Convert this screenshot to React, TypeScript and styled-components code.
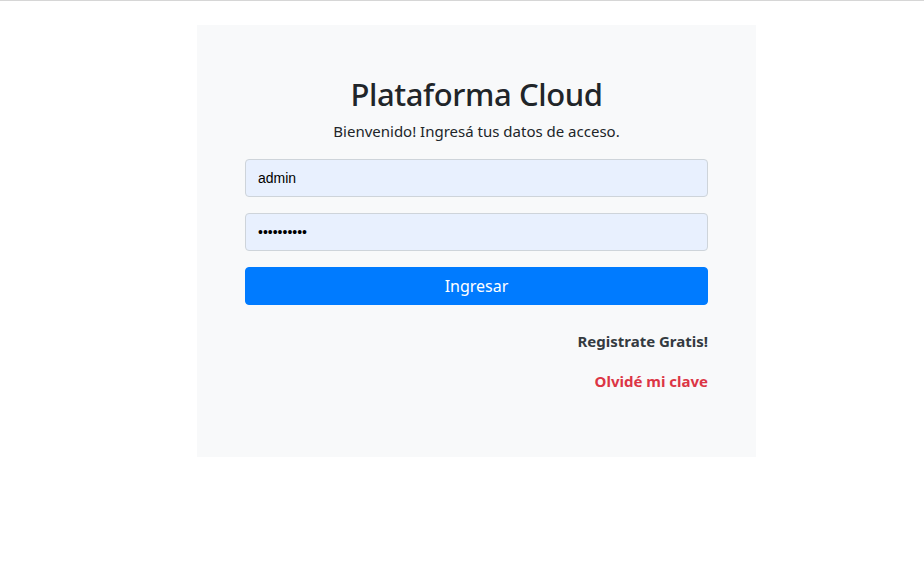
import React from "react";
import styled, { createGlobalStyle } from "styled-components";

const Global = createGlobalStyle`
  html, body { margin: 0; padding: 0; background: #fff; }
  body {
    font-family: "Noto Sans", "Open Sans", "DejaVu Sans", sans-serif;
    color: #212529;
    border-top: 1px solid #d6d6d6;
  }
  * { box-sizing: border-box; }
`;

const Page = styled.div`
  display: flex;
  padding: 24px 0 0 197px;
`;

const Card = styled.div`
  width: 559px;
  background: #f8f9fa;
  padding: 50px 48px 48px 48px;
  display: flex;
  flex-direction: column;
`;

const Title = styled.h1`
  margin: 0 0 6px;
  font-size: 31px;
  font-weight: 500;
  letter-spacing: -0.4px;
  line-height: 38px;
  text-align: center;
  color: #212529;
`;

const Subtitle = styled.p`
  margin: 0 0 16px;
  font-size: 15px;
  line-height: 24px;
  text-align: center;
  color: #212529;
`;

const Input = styled.input`
  display: block;
  width: 100%;
  height: 38px;
  margin: 0 0 16px;
  padding: 0 12px;
  border: 1px solid #ced4da;
  border-radius: 4px;
  background: #e8f0fe;
  font-family: "Liberation Sans", Arial, sans-serif;
  font-size: 14px;
  color: #000;
  outline: none;
`;

const Button = styled.button`
  display: block;
  width: 100%;
  height: 38px;
  border: 1px solid #007bff;
  border-radius: 4px;
  background: #007bff;
  color: #fff;
  font-family: inherit;
  font-size: 16px;
  cursor: pointer;
`;

const Links = styled.div`
  display: flex;
  flex-direction: column;
  align-items: flex-end;
  gap: 16px;
  margin-top: 24px;
  margin-bottom: 16px;
`;

const LinkText = styled.a<{ $danger?: boolean }>`
  font-size: 15px;
  line-height: 24px;
  font-weight: 700;
  text-decoration: none;
  color: ${(p) => (p.$danger ? "#dc3545" : "#343a40")};
`;

export default function App() {
  return (
    <>
      <Global />
      <Page>
        <Card>
          <Title>Plataforma Cloud</Title>
          <Subtitle>Bienvenido! Ingresá tus datos de acceso.</Subtitle>
          <Input type="text" defaultValue="admin" />
          <Input type="password" defaultValue="1234567890" />
          <Button>Ingresar</Button>
          <Links>
            <LinkText href="#">Registrate Gratis!</LinkText>
            <LinkText href="#" $danger>
              Olvidé mi clave
            </LinkText>
          </Links>
        </Card>
      </Page>
    </>
  );
}
